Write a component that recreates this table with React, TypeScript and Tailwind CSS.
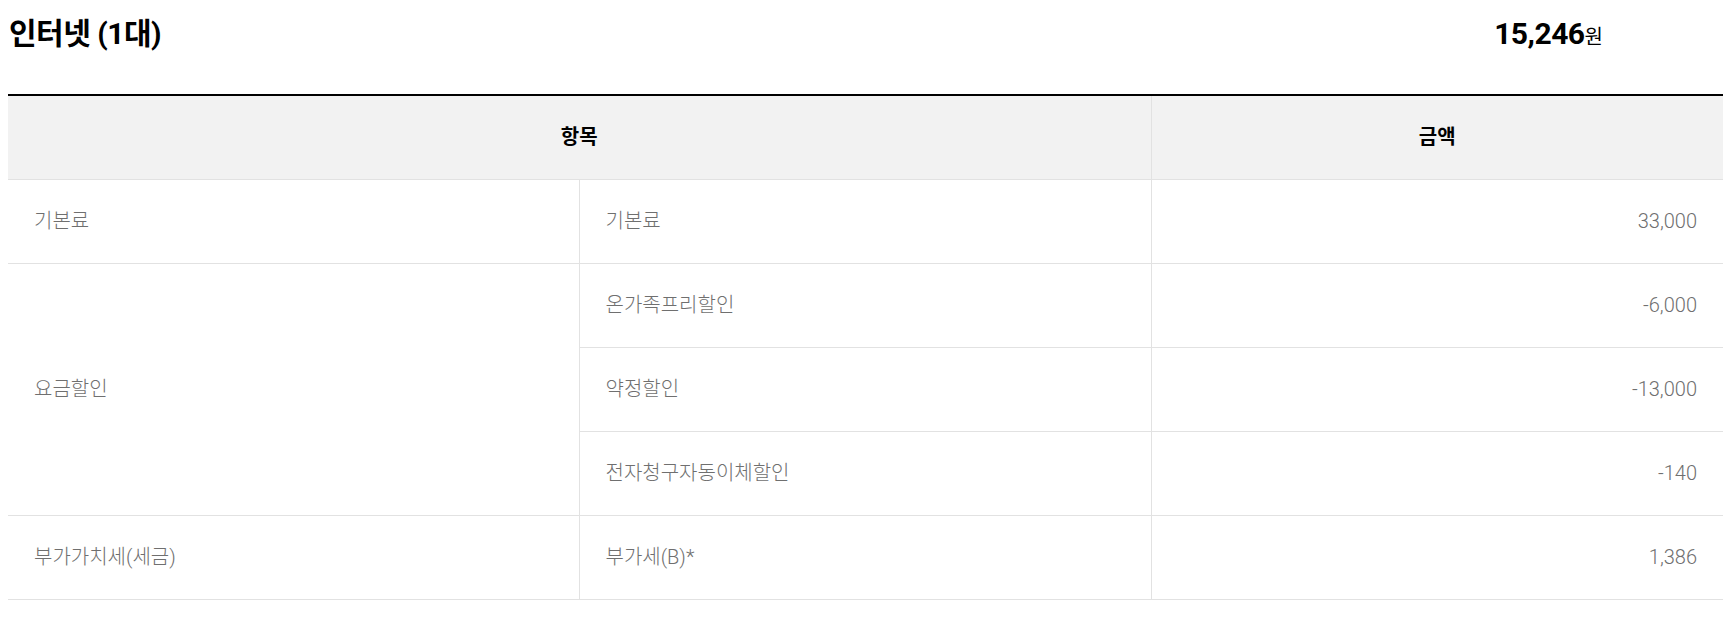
import React from "react";

const font = { fontFamily: "Roboto, 'Noto Sans CJK KR', 'Noto Sans', sans-serif" };

export default function App() {
  const cell = "border-b border-[#e2e2e2] h-[84px] px-[26px] text-[20px] text-[#6f6f6f] font-light align-middle";
  return (
    <div className="w-[1735px] h-[624px] bg-white" style={font}>
      <div className="pl-[8px] pr-[12px]">
        <div className="flex items-center justify-between h-[66px] pt-[1px]">
          <h1 className="text-[30px] font-bold text-black tracking-[-0.5px] pl-[1px]">인터넷 (1대)</h1>
          <div className="flex items-baseline pr-[120px] text-black">
            <span className="text-[30px] font-bold tracking-[-0.5px]">15,246</span>
            <span className="text-[20px] font-normal">원</span>
          </div>
        </div>
        <div className="mt-[28px] border-t-2 border-black">
          <table className="w-full border-collapse table-fixed">
            <colgroup>
              <col className="w-[571px]" />
              <col className="w-[572px]" />
              <col />
            </colgroup>
            <thead>
              <tr className="bg-[#f2f2f2] h-[83px]">
                <th colSpan={2} className="border-b border-r border-[#e2e2e2] text-[20px] font-bold text-black text-center">항목</th>
                <th className="border-b border-[#e2e2e2] text-[20px] font-bold text-black text-center">금액</th>
              </tr>
            </thead>
            <tbody>
              <tr>
                <td className={`${cell} border-r`}>기본료</td>
                <td className={`${cell} border-r`}>기본료</td>
                <td className={`${cell} text-right`}>33,000</td>
              </tr>
              <tr>
                <td rowSpan={3} className={`${cell} border-r`}>요금할인</td>
                <td className={`${cell} border-r`}>온가족프리할인</td>
                <td className={`${cell} text-right`}>-6,000</td>
              </tr>
              <tr>
                <td className={`${cell} border-r`}>약정할인</td>
                <td className={`${cell} text-right`}>-13,000</td>
              </tr>
              <tr>
                <td className={`${cell} border-r`}>전자청구자동이체할인</td>
                <td className={`${cell} text-right`}>-140</td>
              </tr>
              <tr>
                <td className={`${cell} border-r`}>부가가치세(세금)</td>
                <td className={`${cell} border-r`}>부가세(B)*</td>
                <td className={`${cell} text-right`}>1,386</td>
              </tr>
            </tbody>
          </table>
        </div>
      </div>
    </div>
  );
}
